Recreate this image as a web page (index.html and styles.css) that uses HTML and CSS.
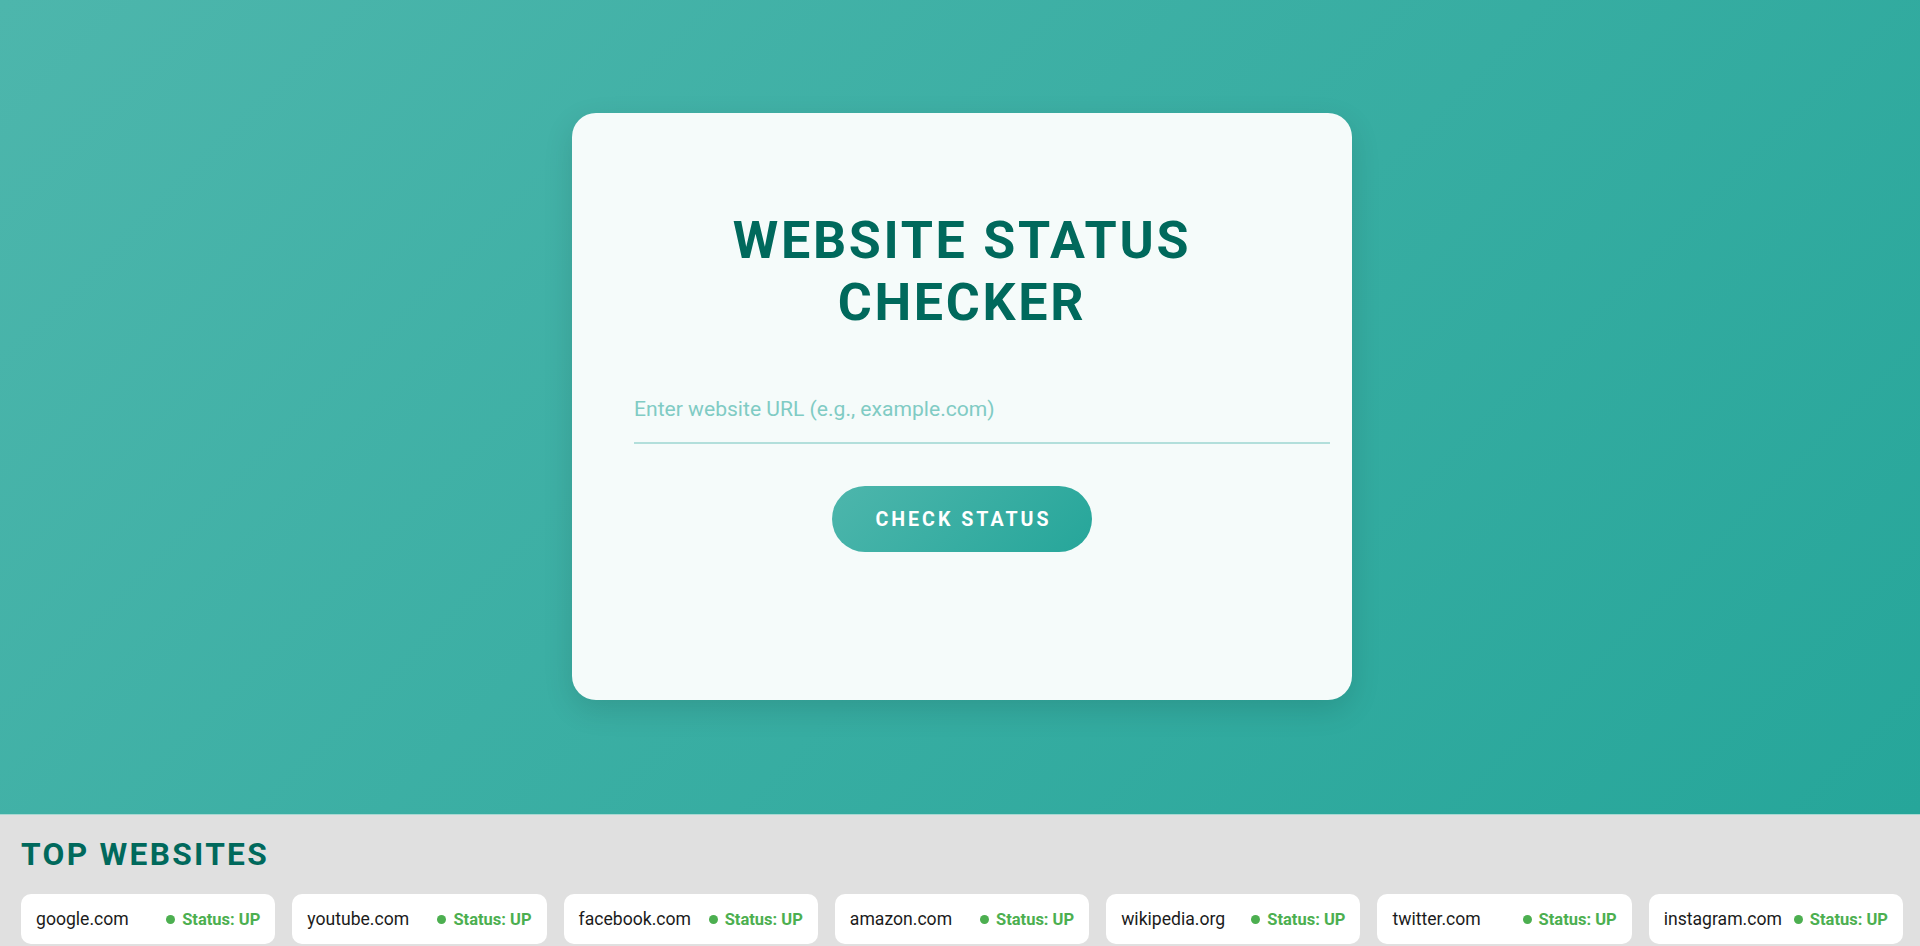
FILE: index.html
```html
<!DOCTYPE html>
<html lang="en">
<head>
<meta charset="utf-8">
<title>Website Status Checker</title>
<link rel="stylesheet" href="styles.css">
</head>
<body>
<main class="hero">
  <section class="card">
    <h1 class="title">Website Status Checker</h1>
    <input class="url-input" type="text" placeholder="Enter website URL (e.g., example.com)">
    <button class="check-btn" type="button">Check Status</button>
  </section>
</main>
<section class="top">
  <h2 class="top-title">Top Websites</h2>
  <div class="site-grid">
    <div class="site"><span class="site-name">google.com</span><span class="status"><span class="dot"></span>Status: UP</span></div>
    <div class="site"><span class="site-name">youtube.com</span><span class="status"><span class="dot"></span>Status: UP</span></div>
    <div class="site"><span class="site-name">facebook.com</span><span class="status"><span class="dot"></span>Status: UP</span></div>
    <div class="site"><span class="site-name">amazon.com</span><span class="status"><span class="dot"></span>Status: UP</span></div>
    <div class="site"><span class="site-name">wikipedia.org</span><span class="status"><span class="dot"></span>Status: UP</span></div>
    <div class="site"><span class="site-name">twitter.com</span><span class="status"><span class="dot"></span>Status: UP</span></div>
    <div class="site"><span class="site-name">instagram.com</span><span class="status"><span class="dot"></span>Status: UP</span></div>
  </div>
</section>
</body>
</html>
```
FILE: styles.css
```css
* { box-sizing: border-box; }

html, body {
  margin: 0;
  padding: 0;
}

body {
  font-family: Roboto, "Noto Sans", Arial, sans-serif;
  background: #e0e0e0;
  overflow: hidden;
}

.hero {
  height: 815px;
  padding: 0 0 1.5px 4px;
  display: flex;
  align-items: center;
  justify-content: center;
  background: linear-gradient(135deg, #4db6ac 0%, #26a69a 100%);
  border-bottom: 1px solid #a9d8d2;
}

.card {
  width: 780px;
  padding: 97px 42px 147.5px;
  background: #f5fbfa;
  border-radius: 24px;
  box-shadow: 0 10px 30px rgba(0, 0, 0, 0.12);
  display: flex;
  flex-direction: column;
  align-items: center;
}

.title {
  margin: 0;
  width: 540px;
  text-align: center;
  font-size: 52px;
  line-height: 62.4px;
  font-weight: 700;
  letter-spacing: 2.7px;
  text-transform: uppercase;
  color: #00695c;
}

.url-input {
  width: 696px;
  align-self: flex-start;
  margin: 41.5px 0 0 20px;
  padding: 20px 0 21px;
  border: none;
  border-bottom: 2px solid #b2dfdb;
  background: transparent;
  font-family: Roboto, sans-serif;
  font-size: 21.1px;
  line-height: 25px;
  color: #00695c;
  outline: none;
}

.url-input::placeholder {
  color: #80cbc4;
  opacity: 1;
}

.check-btn {
  margin-top: 42px;
  width: 260px;
  height: 66px;
  border: none;
  border-radius: 33px;
  background: linear-gradient(135deg, #4db6ac 0%, #26a69a 100%);
  color: #ffffff;
  font-family: Roboto, sans-serif;
  font-size: 19.6px;
  font-weight: 700;
  letter-spacing: 3px;
  text-transform: uppercase;
  padding: 0 0 0 3px;
  cursor: pointer;
}

.top {
  padding: 21px 17px 0 21px;
}

.top-title {
  margin: 0;
  font-size: 31.7px;
  line-height: 37px;
  font-weight: 700;
  letter-spacing: 2.3px;
  text-transform: uppercase;
  color: #00695c;
}

.site-grid {
  margin-top: 21px;
  display: grid;
  grid-template-columns: repeat(7, 1fr);
  gap: 17px;
}

.site {
  height: 50px;
  padding: 0 15px;
  background: #ffffff;
  border-radius: 10px;
  display: flex;
  align-items: center;
  justify-content: space-between;
}

.site-name {
  font-size: 17.6px;
  color: #1b1b1b;
  white-space: nowrap;
}

.status {
  display: flex;
  align-items: center;
  font-size: 16.5px;
  font-weight: 700;
  color: #4caf50;
  white-space: nowrap;
}

.dot {
  width: 9px;
  height: 9px;
  border-radius: 50%;
  background: #4caf50;
  margin-right: 7px;
}
```
